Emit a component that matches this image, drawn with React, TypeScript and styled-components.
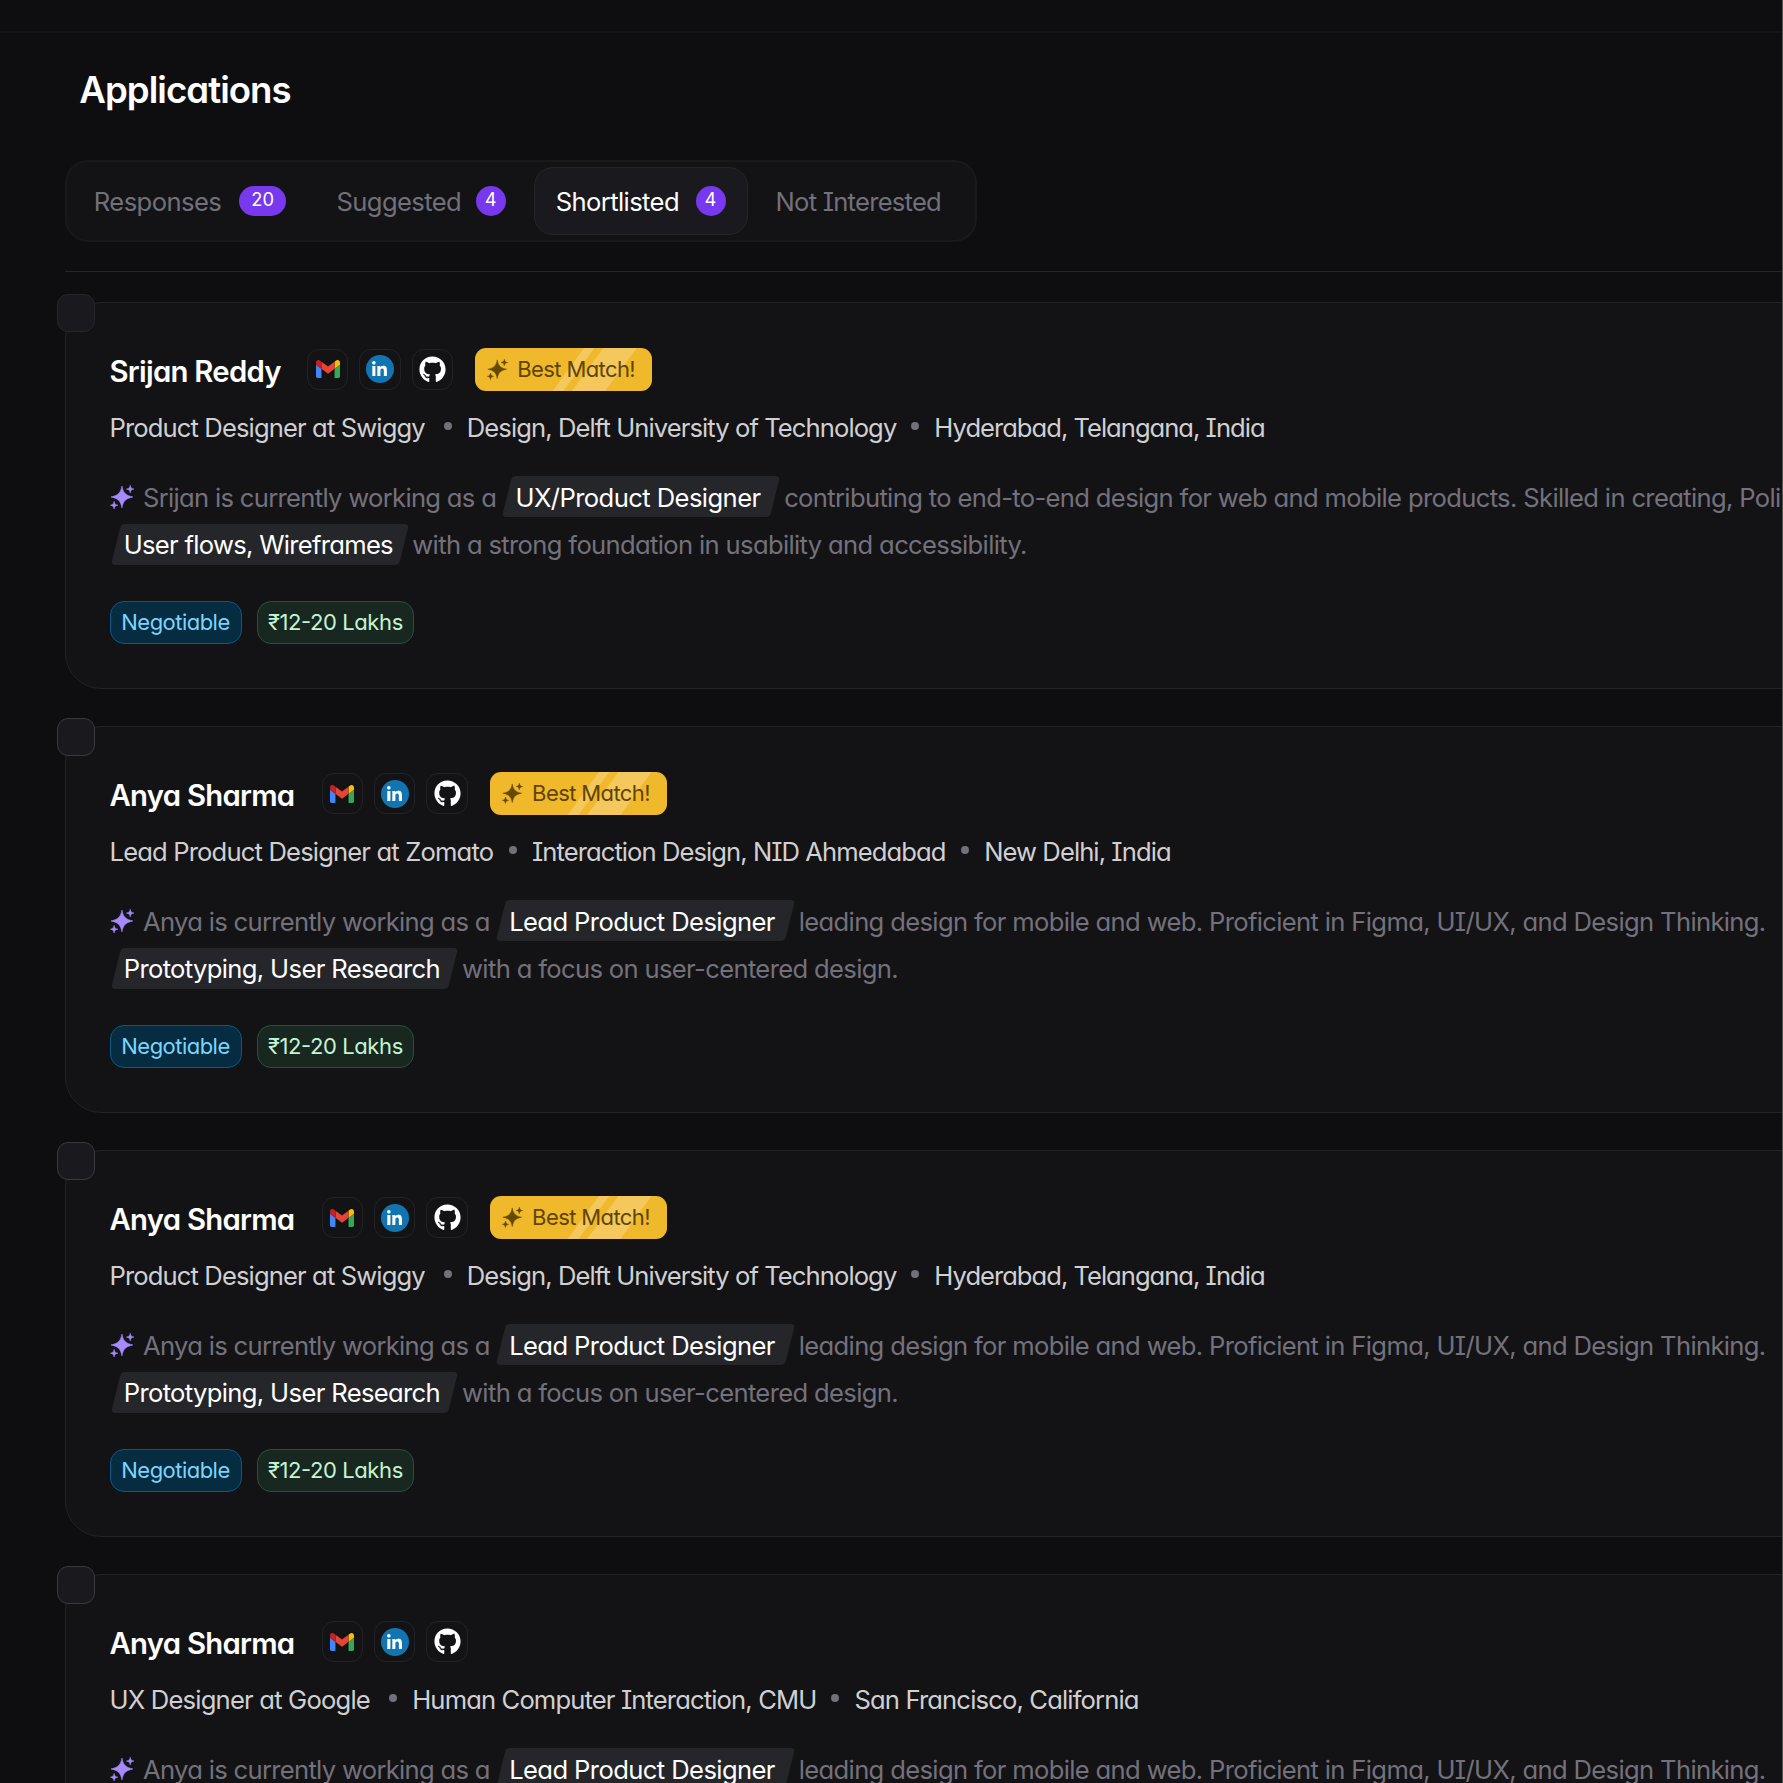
import React from "react";
import styled, { createGlobalStyle } from "styled-components";
import { FaGithub, FaLinkedinIn } from "react-icons/fa";

const GlobalStyle = createGlobalStyle`
  * { box-sizing: border-box; }
  body {
    margin: 0;
    background: #0e0e10;
    color: #fff;
    font-family: Inter, "Liberation Sans", sans-serif;
    font-feature-settings: "cv11", "cv08", "calt";
  }
`;

const Page = styled.div`
  height: 1783px;
  overflow: hidden;
  background: #0e0e10;
  border-right: 1px solid #55544f;
`;

const TopBar = styled.header`
  height: 33px;
  border-bottom: 2px solid #141416;
`;

const Main = styled.main`
  padding-left: 65px;
`;

const Title = styled.h1`
  margin: 0;
  padding: 35px 0 0 14.3px;
  height: 127px;
  font-size: 36.6px;
  line-height: 44px;
  font-weight: 600;
  letter-spacing: -0.95px;
`;

const TabList = styled.nav`
  display: flex;
  align-items: center;
  gap: 6px;
  width: 912px;
  height: 82px;
  padding: 0 4.8px;
  border: 2px solid #19191b;
  border-radius: 23px;
  background: #131315;
`;

const Tab = styled.button<{ $active?: boolean; $gap: number; $track: number }>`
  display: flex;
  align-items: center;
  gap: ${(p) => p.$gap}px;
  height: 68px;
  padding: 0 21px;
  border: 1px solid ${(p) => (p.$active ? "#252529" : "transparent")};
  border-radius: 19px;
  background: ${(p) => (p.$active ? "#1a1a1e" : "transparent")};
  color: ${(p) => (p.$active ? "#fff" : "#71707b")};
  font: inherit;
  font-size: 25.6px;
  font-feature-settings: inherit;
  letter-spacing: ${(p) => p.$track}px;
  white-space: nowrap;
`;

const Count = styled.span<{ $round: boolean }>`
  display: flex;
  justify-content: center;
  min-width: 30px;
  height: 30px;
  padding: 0 ${(p) => (p.$round ? 0 : 12.5)}px;
  border-radius: 15px;
  background: #7839ee;
  color: #fff;
  font-size: 18.3px;
  line-height: 27px;
  letter-spacing: 0;
`;

const Divider = styled.hr`
  height: 1px;
  margin: 29px 0 30px;
  border: 0;
  background: #252527;
`;

const CardList = styled.section`
  display: flex;
  flex-direction: column;
  gap: 37.1px;
`;

const Card = styled.article`
  position: relative;
  width: 1790px;
  height: 387px;
  padding: 45px 0 0 43.5px;
  border: 1px solid #232326;
  border-radius: 36px;
  background: #131315;
`;

const Checkbox = styled.button<{ $dim?: boolean }>`
  position: absolute;
  top: -9px;
  left: -9px;
  width: 38px;
  height: 38px;
  padding: 0;
  border: 1px solid ${(p) => (p.$dim ? "#26262a" : "#39393e")};
  border-radius: 11px;
  background: #1a1a1e;
`;

const NameRow = styled.div`
  display: flex;
  align-items: center;
  height: 43px;
`;

const Name = styled.h2<{ $track: number; $gap: number }>`
  margin: 4px ${(p) => p.$gap}px 0 0;
  font-size: 29.3px;
  line-height: 36px;
  font-weight: 600;
  letter-spacing: ${(p) => p.$track}px;
  white-space: nowrap;
`;

const Socials = styled.div`
  display: flex;
  gap: 11px;
`;

const Social = styled.a`
  display: grid;
  place-items: center;
  width: 41.3px;
  height: 41.3px;
  border: 1px solid #232326;
  border-radius: 12px;
  color: #fff;
`;

const LinkedInDisc = styled.span`
  display: grid;
  place-items: center;
  width: 28px;
  height: 28px;
  padding-top: 1px;
  border-radius: 50%;
  background: #1275b1;
`;

const MatchBadge = styled.span`
  position: relative;
  z-index: 0;
  display: flex;
  align-items: center;
  gap: 9px;
  width: 176.5px;
  height: 43px;
  margin-left: 22.4px;
  padding: 0 0 1px 12px;
  overflow: hidden;
  border-radius: 11px;
  background: #f0b92b;
  color: #604400;
  font-size: 22px;
  line-height: 26px;
  letter-spacing: -0.6px;
  white-space: nowrap;
`;

const Shine = styled.svg`
  position: absolute;
  inset: 0;
  z-index: -1;
`;

const Meta = styled.div`
  display: flex;
  align-items: center;
  height: 32px;
  margin-top: 20.5px;
  color: #d0d0d2;
  font-size: 25.6px;
  line-height: 32px;
  white-space: nowrap;
`;

const MetaText = styled.span<{ $track: number }>`
  letter-spacing: ${(p) => p.$track}px;
`;

const Dot = styled.i<{ $before: number }>`
  width: 8px;
  height: 8px;
  margin: 0 15px 3px ${(p) => p.$before}px;
  border-radius: 50%;
  background: #71707b;
`;

const Summary = styled.div`
  margin-top: 30px;
  color: #73717c;
  font-size: 25.6px;
  letter-spacing: -0.655px;
  white-space: nowrap;
`;

const Line = styled.div`
  display: flex;
  align-items: center;
  height: 47.5px;
`;

const Lead = styled.span`
  margin: 0 9.3px 0 8.4px;
  letter-spacing: -0.69px;
`;

const Highlight = styled.mark<{ $end: number; $track: number }>`
  position: relative;
  z-index: 0;
  height: 41.5px;
  margin: 0 9px 0 2px;
  padding: 0 ${(p) => p.$end}px 0 8px;
  background: none;
  color: #fff;
  line-height: 42px;
  letter-spacing: ${(p) => p.$track}px;
  &:first-child {
    margin-left: 6.2px;
  }
  &::before {
    content: "";
    position: absolute;
    inset: -0.5px 0 1px;
    z-index: -1;
    border-radius: 4px;
    background: #25262a;
    transform: skewX(-14deg);
  }
`;

const Tags = styled.div`
  display: flex;
  gap: 15px;
  margin-top: 32.5px;
`;

const Tag = styled.span<{ $tone: "blue" | "green" }>`
  height: 43px;
  width: ${(p) => (p.$tone === "blue" ? 132 : 157.8)}px;
  border: 1px solid ${(p) => (p.$tone === "blue" ? "#075a8a" : "#28513c")};
  border-radius: 14px;
  background: ${(p) => (p.$tone === "blue" ? "#062c41" : "#182720")};
  color: ${(p) => (p.$tone === "blue" ? "#7cd4fd" : "#c2f5d3")};
  font-size: 22px;
  line-height: 41px;
  letter-spacing: ${(p) => (p.$tone === "blue" ? -0.53 : -0.4)}px;
  text-align: center;
  white-space: nowrap;
`;

const SparkleIcon = styled.svg<{ $shift?: number }>`
  flex: none;
  margin-left: ${(p) => p.$shift ?? 0}px;
`;

const Sparkle = ({ size, color, shift }: { size: number; color: string; shift?: number }) => (
  <SparkleIcon $shift={shift} width={size} height={size} viewBox="0 0 24 24" fill={color} stroke={color} strokeLinejoin="round">
    <path d="M11.7 1C12.9 7.4 15 10.2 22.4 11.7C15 13.2 12.9 16 11.7 22.4C10.5 16 8.4 13.2 1 11.7C8.4 10.2 10.5 7.4 11.7 1Z" strokeWidth=".6" />
    <path d="M19.8 .4C20.2 2.7 21 3.6 23.5 4C21 4.4 20.2 5.3 19.8 7.7C19.4 5.3 18.6 4.4 16.1 4C18.6 3.6 19.4 2.7 19.8 .4Z" strokeWidth=".6" />
    <path d="M4 16.1C4.4 18.5 5.2 19.4 7.7 19.8C5.2 20.2 4.4 21.1 4 23.5C3.6 21.1 2.8 20.2 .4 19.8C2.8 19.4 3.6 18.5 4 16.1Z" strokeWidth=".6" />
  </SparkleIcon>
);

const Gmail = () => (
  <svg width="24" height="18" viewBox="52 42 88 66">
    <path fill="#4285f4" d="M58 108h14V74L52 59v43c0 3.32 2.69 6 6 6" />
    <path fill="#34a853" d="M120 108h14c3.32 0 6-2.69 6-6V59l-20 15" />
    <path fill="#fbbc04" d="M120 48v26l20-15v-8c0-7.42-8.47-11.65-14.4-7.2" />
    <path fill="#ea4335" d="M72 74V48l24 18 24-18v26L96 92" />
    <path fill="#c5221f" d="M52 51v8l20 15V48l-5.6-4.2c-5.94-4.45-14.4-.22-14.4 7.2" />
  </svg>
);

type MetaItem = { text: string; track: number; before?: number };
type Marked = { text: string; track: number; end: number };
type Candidate = {
  name: string;
  nameTrack: number;
  nameGap: number;
  best: boolean;
  meta: MetaItem[];
  lead: string;
  role: Marked;
  after: string;
  skills: Marked;
  closing: string;
};

const swiggyMeta: MetaItem[] = [
  { text: "Product Designer at Swiggy", track: -0.88 },
  { text: "Design, Delft University of Technology", track: -0.92, before: 19 },
  { text: "Hyderabad, Telangana, India", track: -1, before: 15 },
];

const anya = {
  name: "Anya Sharma",
  nameTrack: -0.74,
  nameGap: 27.5,
  best: true,
  lead: "Anya is currently working as a",
  role: { text: "Lead Product Designer", track: -0.6, end: 14.9 },
  after: "leading design for mobile and web. Proficient in Figma, UI/UX, and Design Thinking.",
  skills: { text: "Prototyping, User Research", track: -0.65, end: 13 },
  closing: "with a focus on user-centered design.",
};

const candidates: Candidate[] = [
  {
    name: "Srijan Reddy",
    nameTrack: -0.72,
    nameGap: 26.1,
    best: true,
    meta: swiggyMeta,
    lead: "Srijan is currently working as a",
    role: { text: "UX/Product Designer", track: -0.58, end: 14.6 },
    after: "contributing to end-to-end design for web and mobile products. Skilled in creating, Poli",
    skills: { text: "User flows, Wireframes", track: -0.7, end: 10.4 },
    closing: "with a strong foundation in usability and accessibility.",
  },
  {
    ...anya,
    meta: [
      { text: "Lead Product Designer at Zomato", track: -0.84 },
      { text: "Interaction Design, NID Ahmedabad", track: -0.94, before: 15.8 },
      { text: "New Delhi, India", track: -0.93, before: 15.8 },
    ],
  },
  { ...anya, meta: swiggyMeta },
  {
    ...anya,
    best: false,
    meta: [
      { text: "UX Designer at Google", track: -0.8 },
      { text: "Human Computer Interaction, CMU", track: -0.87, before: 19.3 },
      { text: "San Francisco, California", track: -0.85, before: 15 },
    ],
  },
];

const tabs = [
  { label: "Responses", count: "20", gap: 17.5, track: -0.57 },
  { label: "Suggested", count: "4", gap: 14.5, track: -0.6 },
  { label: "Shortlisted", count: "4", gap: 16.5, track: -0.6, active: true },
  { label: "Not Interested", gap: 0, track: -0.75 },
];

function CandidateCard({ c, dim }: { c: Candidate; dim: boolean }) {
  return (
    <Card>
      <Checkbox $dim={dim} aria-label={`Select ${c.name}`} />
      <NameRow>
        <Name $track={c.nameTrack} $gap={c.nameGap}>{c.name}</Name>
        <Socials>
          <Social><Gmail /></Social>
          <Social><LinkedInDisc><FaLinkedinIn size={17} /></LinkedInDisc></Social>
          <Social><FaGithub size={27} /></Social>
        </Socials>
        {c.best && (
          <MatchBadge>
            <Shine width="177" height="43" fill="#f4c85c">
              <path d="M109 0H119.3L88.5 43H77.7Z" />
              <path d="M128.3 0H161.7L130.3 43H97Z" />
            </Shine>
            <Sparkle size={21} color="#664900" />
            Best Match!
          </MatchBadge>
        )}
      </NameRow>
      <Meta>
        {c.meta.map((m) => (
          <React.Fragment key={m.text}>
            {m.before && <Dot $before={m.before} />}
            <MetaText $track={m.track}>{m.text}</MetaText>
          </React.Fragment>
        ))}
      </Meta>
      <Summary>
        <Line>
          <Sparkle size={24.5} color="#a48afb" shift={0.6} />
          <Lead>{c.lead}</Lead>
          <Highlight $end={c.role.end} $track={c.role.track}>{c.role.text}</Highlight>
          <span>{c.after}</span>
        </Line>
        <Line>
          <Highlight $end={c.skills.end} $track={c.skills.track}>{c.skills.text}</Highlight>
          <span>{c.closing}</span>
        </Line>
      </Summary>
      <Tags>
        <Tag $tone="blue">Negotiable</Tag>
        <Tag $tone="green">₹12-20 Lakhs</Tag>
      </Tags>
    </Card>
  );
}

export default function App() {
  return (
    <Page>
      <GlobalStyle />
      <TopBar />
      <Main>
        <Title>Applications</Title>
        <TabList>
          {tabs.map((t) => (
            <Tab key={t.label} $active={t.active} $gap={t.gap} $track={t.track}>
              {t.label}
              {t.count && <Count $round={t.count.length === 1}>{t.count}</Count>}
            </Tab>
          ))}
        </TabList>
        <Divider />
        <CardList>
          {candidates.map((c, i) => (
            <CandidateCard key={i} c={c} dim={i === 0} />
          ))}
        </CardList>
      </Main>
    </Page>
  );
}
